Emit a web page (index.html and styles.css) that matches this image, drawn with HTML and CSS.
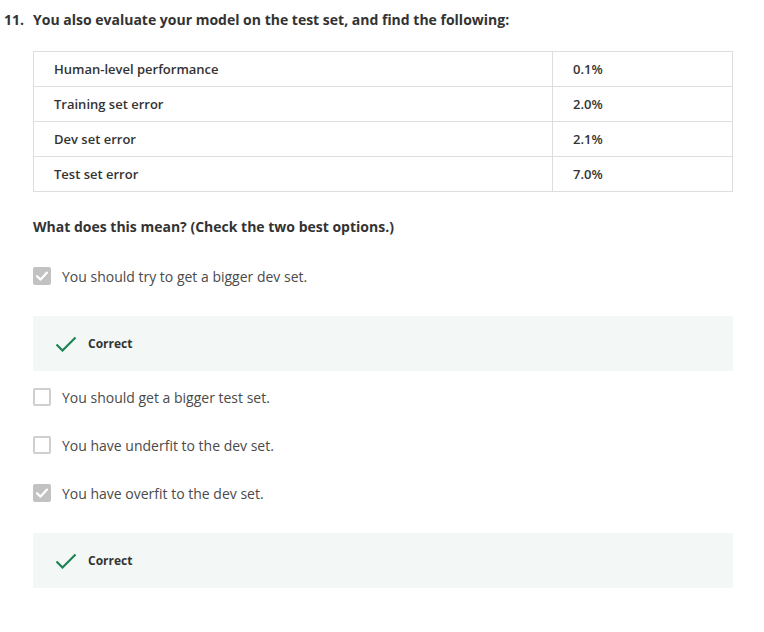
FILE: index.html
```html
<!DOCTYPE html>
<html>
<head>
<meta charset="utf-8">
<link rel="stylesheet" href="styles.css">
</head>
<body>
<div class="question">
  <div class="qhead">
    <span class="qnum">11.</span>
    <span class="qtext">You also evaluate your model on the test set, and find the following:</span>
  </div>
  <div class="qbody">
    <table class="data">
      <tr><td class="label">Human-level performance</td><td class="value">0.1%</td></tr>
      <tr><td class="label">Training set error</td><td class="value">2.0%</td></tr>
      <tr><td class="label">Dev set error</td><td class="value">2.1%</td></tr>
      <tr><td class="label">Test set error</td><td class="value">7.0%</td></tr>
    </table>
    <p class="prompt">What does this mean? (Check the two best options.)</p>

    <div class="option">
      <span class="box checked"><svg viewBox="0 0 18 18" width="18" height="18"><path d="M4 9.2 L7.6 12.6 L14 5.6" fill="none" stroke="#fff" stroke-width="2.2" stroke-linecap="round" stroke-linejoin="round"/></svg></span>
      <span class="otext">You should try to get a bigger dev set.</span>
    </div>
    <div class="feedback first">
      <svg class="tick" viewBox="0 0 22 16" width="22" height="16"><path d="M1.5 8.5 L7.5 14.5 L20.5 1.5" fill="none" stroke="#1f8354" stroke-width="2.2"/></svg>
      <span class="ftext">Correct</span>
    </div>

    <div class="option">
      <span class="box"></span>
      <span class="otext">You should get a bigger test set.</span>
    </div>
    <div class="option">
      <span class="box"></span>
      <span class="otext">You have underfit to the dev set.</span>
    </div>
    <div class="option">
      <span class="box checked"><svg viewBox="0 0 18 18" width="18" height="18"><path d="M4 9.2 L7.6 12.6 L14 5.6" fill="none" stroke="#fff" stroke-width="2.2" stroke-linecap="round" stroke-linejoin="round"/></svg></span>
      <span class="otext">You have overfit to the dev set.</span>
    </div>
    <div class="feedback">
      <svg class="tick" viewBox="0 0 22 16" width="22" height="16"><path d="M1.5 8.5 L7.5 14.5 L20.5 1.5" fill="none" stroke="#1f8354" stroke-width="2.2"/></svg>
      <span class="ftext">Correct</span>
    </div>
  </div>
</div>
</body>
</html>
```
FILE: styles.css
```css
html, body {
  margin: 0;
  padding: 0;
  background: #fff;
}
body {
  font-family: "Open Sans", "Liberation Sans", sans-serif;
  color: #333;
}
.question {
  padding-top: 10px;
}
.qhead {
  display: flex;
  font-size: 14px;
  font-weight: 700;
  line-height: 20px;
  color: #333;
}
.qnum {
  width: 29px;
  padding-left: 4px;
  box-sizing: content-box;
}
.qtext {
  flex: 1;
}
.qbody {
  margin-left: 33px;
  width: 700px;
}
.data {
  margin-top: 21px;
  width: 700px;
  border-collapse: collapse;
}
.data td {
  border: 1px solid #dedede;
  height: 35px;
  padding: 0 0 0 20px;
  font-size: 13px;
  font-weight: 600;
  color: #333;
  box-sizing: border-box;
}
.data td.label {
  width: 519px;
}
.prompt {
  margin: 25px 0 0 0;
  font-size: 14px;
  font-weight: 700;
  line-height: 20px;
  color: #333;
}
.option {
  display: flex;
  align-items: center;
  height: 24px;
  margin-top: 24px;
}
.prompt + .option {
  margin-top: 27px;
}
.feedback + .option {
  margin-top: 14px;
}
.box {
  width: 18px;
  height: 18px;
  box-sizing: border-box;
  border: 2px solid #cfcfcf;
  border-radius: 2px;
  background: #fff;
  margin-right: 11px;
  display: flex;
  align-items: center;
  justify-content: center;
}
.box.checked {
  border: none;
  background: #c2c2c2;
}
.otext {
  font-size: 14px;
  color: #4a4a4a;
}
.feedback {
  margin-top: 28px;
  height: 55px;
  background: #f3f8f6;
  display: flex;
  align-items: center;
  padding-left: 22px;
}
.tick {
  margin-right: 11px;
}
.ftext {
  font-size: 12px;
  font-weight: 700;
  color: #333;
}
```
